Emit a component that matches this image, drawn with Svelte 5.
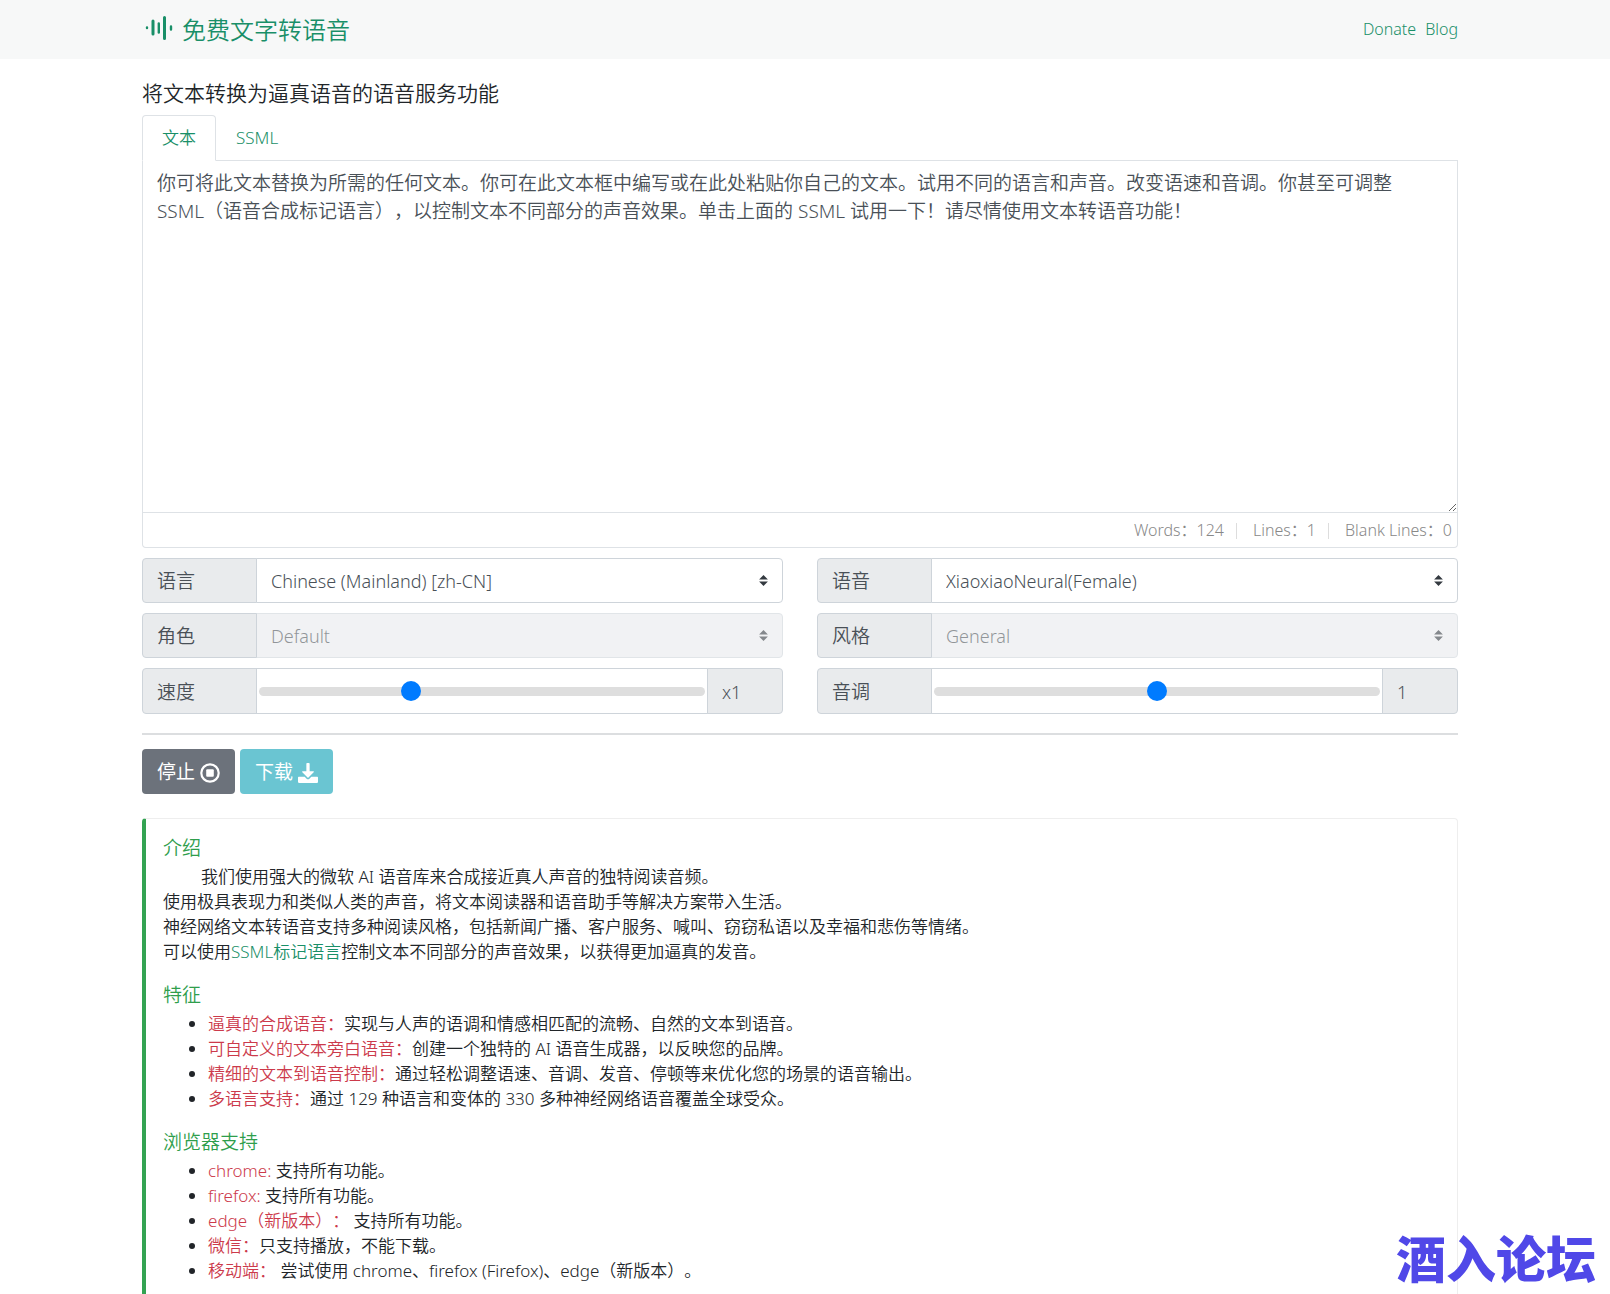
<script lang="ts">
  let text = $state("你可将此文本替换为所需的任何文本。你可在此文本框中编写或在此处粘贴你自己的文本。试用不同的语言和声音。改变语速和音调。你甚至可调整SSML（语音合成标记语言），以控制文本不同部分的声音效果。单击上面的 SSML 试用一下！请尽情使用文本转语音功能！");
  let tab = $state("text");
  let speed = $state(1);
  let pitch = $state(1);

  const words = $derived(text.length);
  const lines = $derived(text.split("\n").length);
  const blankLines = $derived(text.split("\n").filter(l => !l.trim()).length);

  const features = [
    ["逼真的合成语音：", "实现与人声的语调和情感相匹配的流畅、自然的文本到语音。"],
    ["可自定义的文本旁白语音：", "创建一个独特的 AI 语音生成器，以反映您的品牌。"],
    ["精细的文本到语音控制：", "通过轻松调整语速、音调、发音、停顿等来优化您的场景的语音输出。"],
    ["多语言支持：", "通过 129 种语言和变体的 330 多种神经网络语音覆盖全球受众。"],
  ];

  const browsers = [
    ["chrome:", " 支持所有功能。"],
    ["firefox:", " 支持所有功能。"],
    ["edge（新版本）：", " 支持所有功能。"],
    ["微信：", "只支持播放，不能下载。"],
    ["移动端：", " 尝试使用 chrome、firefox (Firefox)、edge（新版本）。"],
  ];
</script>

<div class="page">
  <header class="navbar">
    <a class="brand" href="/">
      <svg width="28" height="28" viewBox="0 0 28 28" aria-hidden="true">
        <g fill="none" stroke="currentColor" stroke-linecap="round">
          <path stroke-width="2.400" d="M2 11.500v.5M26 10.500v3" />
          <path stroke-width="3" d="M8 5v13M19.500 1.500v21" />
          <path stroke-width="2.400" d="M13.800 7.500v9" />
        </g>
      </svg>
      <span>免费文字转语音</span>
    </a>
    <nav>
      <a href="#donate">Donate</a>
      <a href="#blog">Blog</a>
    </nav>
  </header>

  <main>
    <h1>将文本转换为逼真语音的语音服务功能</h1>

    <div class="tabs" role="tablist">
      <button role="tab" aria-selected={tab == "text"} class:active={tab == "text"} onclick={() => tab = "text"}>文本</button>
      <button role="tab" aria-selected={tab == "ssml"} class:active={tab == "ssml"} onclick={() => tab = "ssml"}>SSML</button>
    </div>

    <textarea aria-label="文本" spellcheck="false" bind:value={text}></textarea>
    <div class="counter">
      <span>Words：{words}</span>
      <span>Lines：{lines}</span>
      <span>Blank Lines：{blankLines}</span>
    </div>

    <div class="options">
      <div class="group">
        <label for="language">语言</label>
        <select id="language"><option>Chinese (Mainland) [zh-CN]</option></select>
      </div>
      <div class="group">
        <label for="voice">语音</label>
        <select id="voice"><option>XiaoxiaoNeural(Female)</option></select>
      </div>
      <div class="group">
        <label for="role">角色</label>
        <select id="role" disabled><option>Default</option></select>
      </div>
      <div class="group">
        <label for="style">风格</label>
        <select id="style" disabled><option>General</option></select>
      </div>
      <div class="group slider">
        <label for="speed">速度</label>
        <div class="range"><input id="speed" type="range" min="0" max="3" step="0.01" bind:value={speed} /></div>
        <output for="speed">x{speed}</output>
      </div>
      <div class="group slider">
        <label for="pitch">音调</label>
        <div class="range"><input id="pitch" type="range" min="0" max="2" step="0.01" bind:value={pitch} /></div>
        <output for="pitch">{pitch}</output>
      </div>
    </div>

    <hr />

    <div class="actions">
      <button class="stop">
        停止
        <svg width="20" height="20" viewBox="0 0 20 20" aria-hidden="true">
          <circle cx="10" cy="10" r="8.700" fill="none" stroke="currentColor" stroke-width="2.200" />
          <rect x="6.200" y="6.200" width="7.600" height="7.600" rx="1" fill="currentColor" />
        </svg>
      </button>
      <button class="download">
        下载
        <svg width="20" height="20" viewBox="0 0 512 512" aria-hidden="true">
          <path fill="currentColor" d="M232 0h48c10 0 18 8 18 18v190h92c16 0 22 18 11 29L268 370c-7 7-17 7-24 0L111 237c-11-11-5-29 11-29h92V18c0-10 8-18 18-18zM512 376v112c0 13-11 24-24 24H24c-13 0-24-11-24-24V376c0-13 11-24 24-24h147l49 49c20 20 52 20 72 0l49-49h147c13 0 24 11 24 24z" />
        </svg>
      </button>
    </div>

    <article class="callout">
      <h2>介绍</h2>
      <p class="lead">我们使用强大的微软 AI 语音库来合成接近真人声音的独特阅读音频。</p>
      <p>使用极具表现力和类似人类的声音，将文本阅读器和语音助手等解决方案带入生活。</p>
      <p>神经网络文本转语音支持多种阅读风格，包括新闻广播、客户服务、喊叫、窃窃私语以及幸福和悲伤等情绪。</p>
      <p>可以使用<a href="#ssml">SSML标记语言</a>控制文本不同部分的声音效果，以获得更加逼真的发音。</p>

      <h2>特征</h2>
      <ul>
        {#each features as [name, desc]}
          <li><span class="name">{name}</span>{desc}</li>
        {/each}
      </ul>

      <h2>浏览器支持</h2>
      <ul>
        {#each browsers as [name, desc]}
          <li><span class="name">{name}</span>{desc}</li>
        {/each}
      </ul>
    </article>
  </main>

  <div class="watermark">酒入论坛</div>
</div>

<style>
  :global(body) {
    margin: 0;
    background: #fff;
  }

  .page {
    display: flex;
    flex-direction: column;
    min-height: 100vh;
    font-family: "Noto Sans", "Noto Sans CJK SC", sans-serif;
    font-size: 17px;
    font-weight: 350;
    line-height: 25px;
    color: #212529;
    text-spacing-trim: space-all;
  }

  .page * {
    box-sizing: border-box;
  }

  button, select, textarea {
    font: inherit;
    color: inherit;
    text-spacing-trim: inherit;
  }

  a {
    color: #198f68;
    text-decoration: none;
  }

  .navbar {
    display: flex;
    align-items: center;
    justify-content: space-between;
    height: 59px;
    padding: 0 152px 0 145px;
    background: #f7f8f8;
  }

  .brand {
    display: flex;
    align-items: center;
    gap: 9px;
    font-size: 24px;
    line-height: 36px;
  }

  nav {
    display: flex;
    gap: 9px;
    font-size: 16px;
  }

  main {
    flex: 1;
    display: flex;
    flex-direction: column;
    padding: 21px 152px 0 142px;
  }

  h1 {
    margin: 0 0 9px;
    font-size: 21px;
    font-weight: inherit;
    line-height: 26px;
  }

  .tabs {
    display: flex;
    margin-bottom: -1px;

    button {
      height: 46px;
      padding: 0 19px 2px;
      border: 1px solid transparent;
      border-radius: 4px 4px 0 0;
      background: none;
      color: #198f68;

      &.active {
        position: relative;
        border-color: #dee2e6 #dee2e6 #fff;
        background: #fff;
      }
    }
  }

  textarea {
    display: block;
    width: 100%;
    height: 353px;
    padding: 8px 24px 8px 14px;
    border: 1px solid #dee2e6;
    border-radius: 0;
    outline: none;
    background: #fff;
    font-size: 19px;
    line-height: 28px;
    color: #495057;
    resize: vertical;
  }

  .counter {
    display: flex;
    justify-content: flex-end;
    height: 35px;
    padding: 5px 5px 4px;
    border: 1px solid #dee2e6;
    border-top: 0;
    border-radius: 0 0 4px 4px;
    font-size: 16px;
    color: #888;

    span + span {
      margin-left: 12px;
      padding-left: 17px;
      background: linear-gradient(#ddd, #ddd) left center / 1px 16px no-repeat;
    }
  }

  .options {
    display: grid;
    grid-template-columns: 1fr 1fr;
    gap: 10px 34px;
    margin-top: 10px;
  }

  .group {
    display: flex;
    height: 45px;
    font-size: 19px;
    color: #495057;

    &.slider {
      height: 46px;
    }

    label, output {
      display: flex;
      align-items: center;
      padding: 2px 14px 0;
      border: 1px solid #ced4da;
      background: #e9ebed;
    }

    label {
      width: 115px;
      border-radius: 4px 0 0 4px;
    }

    output {
      width: 76px;
      border-radius: 0 4px 4px 0;
      font-size: 18px;
    }

    select {
      flex: 1;
      margin-left: -1px;
      padding: 2px 14px 0;
      border: 1px solid #ced4da;
      border-radius: 0 4px 4px 0;
      appearance: none;
      background: #fff url("data:image/svg+xml,%3Csvg xmlns='http://www.w3.org/2000/svg' viewBox='0 0 4 5'%3E%3Cpath fill='%23343a40' d='M2 0L0 2h4zm0 5L0 3h4z'/%3E%3C/svg%3E") right 14px center / 9px 11px no-repeat;
      font-size: 18px;

      &:disabled {
        opacity: 0.6;
        background-color: #e9ebed;
      }
    }
  }

  .range {
    flex: 1;
    display: flex;
    align-items: center;
    margin: 0 -1px;
    padding: 0 2px;
    border: 1px solid #ced4da;

    input {
      width: 100%;
      height: 20px;
      margin: 0;
      appearance: none;
      background: none;
    }

    input::-webkit-slider-runnable-track {
      height: 9px;
      border-radius: 5px;
      background: #dedede;
    }

    input::-webkit-slider-thumb {
      width: 20px;
      height: 20px;
      margin-top: -6px;
      border-radius: 50%;
      appearance: none;
      background: #007bff;
    }
  }

  hr {
    width: 100%;
    height: 2px;
    margin: 19px 0 14px;
    border: 0;
    background: #dcdee0;
  }

  .actions {
    display: flex;
    gap: 5px;
    margin-bottom: 24px;

    button {
      display: flex;
      align-items: center;
      gap: 5px;
      height: 45px;
      padding: 2px 15px 0;
      border: 0;
      border-radius: 4px;
      font-size: 19px;
      font-weight: 400;
      color: #fff;
    }

    .stop {
      background: #6c727b;
    }

    .download {
      background: #6ac5d2;
    }
  }

  .callout {
    flex: 1;
    padding: 18px 17px 0;
    border: 1px solid #eee;
    border-left: 4px solid #33a352;
    border-bottom: 0;
    border-radius: 4px 4px 0 0;

    h2 {
      margin: 0 0 4px;
      font-size: 19px;
      font-weight: inherit;
      line-height: 23px;
      color: #2f9e4c;
    }

    p {
      margin: 0;
    }

    .lead {
      text-indent: 38px;
    }

    p + h2, ul + h2 {
      margin-top: 20px;
    }

    ul {
      margin: 0;
      padding-left: 45px;
    }
  }

  .name {
    color: #cc3a4b;
  }

  .watermark {
    position: fixed;
    right: 14px;
    bottom: 10px;
    font-size: 50px;
    font-weight: 900;
    line-height: 50px;
    color: #5048e8;
    pointer-events: none;
  }
</style>
